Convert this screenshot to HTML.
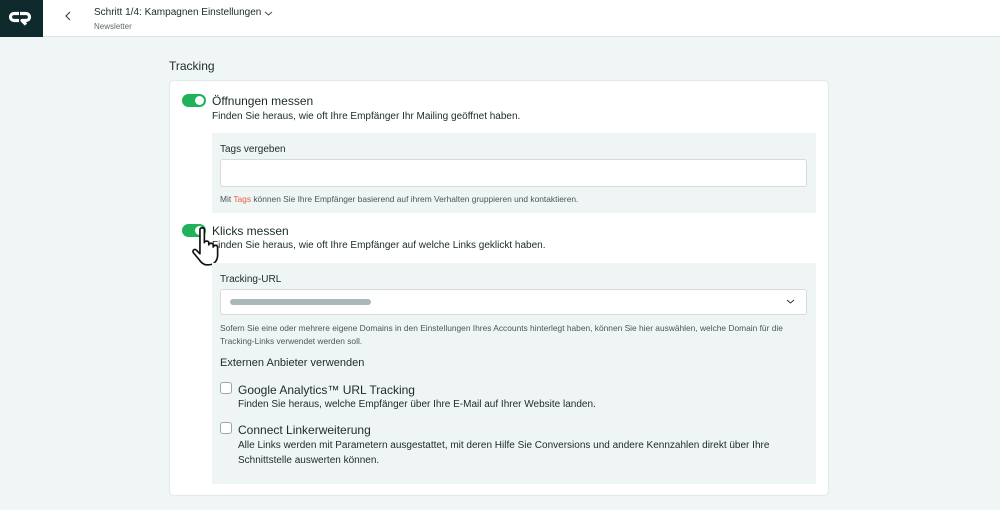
<!DOCTYPE html>
<html><head><meta charset="utf-8"><style>
*{box-sizing:border-box;margin:0;padding:0}
body{width:1000px;height:510px;overflow:hidden;background:#f0f5f5;font-family:"Liberation Sans",sans-serif;color:#1c2a2c;position:relative}
.hdr{position:absolute;left:0;top:0;width:1000px;height:37px;background:#fff;border-bottom:1px solid #dde3e3}
.logo{position:absolute;left:0;top:0;width:43px;height:37px;background:#0f2a2d}
.a{position:absolute;white-space:nowrap}
.card{position:absolute;left:169px;top:80px;width:660px;height:416px;background:#fff;border:1px solid #e3e8e8;border-radius:5px}
.box{position:absolute;background:#eff4f4}
.tog{position:absolute;width:24px;height:13px;border-radius:7px;background:#1fb25a}
.tog:after{content:"";position:absolute;right:2px;top:2px;width:9px;height:9px;border-radius:50%;background:#fff}
.inp{position:absolute;background:#fff;border:1px solid #d5dcdc;border-radius:3px}
.cb{position:absolute;width:12px;height:12px;border:1px solid #9aa5a6;border-radius:3px;background:#fff}
.t13{font-size:12px}.t11{font-size:10px}.t8{font-size:8.4px;color:#4a5758}
</style></head><body>
<div class="hdr"></div>
<div class="logo"><svg width="43" height="37" viewBox="0 0 43 37"><path d="M19 13.5h-5a3.5 3.5 0 0 0 0 7h5" stroke="#fff" stroke-width="3.2" fill="none"/><path d="M20 13.5h6a3.5 3.5 0 0 1 0 7h-4l4 4" stroke="#fff" stroke-width="3.2" fill="none" stroke-linejoin="round"/></svg></div>
<svg class="a" style="left:64px;top:10px" width="8" height="12"><path d="M6 2L2 6l4 4" stroke="#444" fill="none" stroke-width="1.2"/></svg>
<div class="a" style="left:94px;top:7px;font-size:10px;color:#1c2a2c">Schritt 1/4: Kampagnen Einstellungen</div>
<svg class="a" style="left:264px;top:10px" width="9" height="7"><path d="M1 2l3.5 3L8 2" stroke="#444" fill="none"/></svg>
<div class="a" style="left:94px;top:22px;font-size:8px;color:#5d6a6b">Newsletter</div>
<div class="a" style="left:169px;top:59px;font-size:12px">Tracking</div>
<div class="card"></div>
<div class="tog" style="left:182px;top:94px"></div>
<div class="a t13" style="left:212px;top:94px">Öffnungen messen</div>
<div class="a t11" style="left:212px;top:111px">Finden Sie heraus, wie oft Ihre Empfänger Ihr Mailing geöffnet haben.</div>
<div class="box" style="left:212px;top:133px;width:604px;height:80px"></div>
<div class="a t11" style="left:220px;top:144px">Tags vergeben</div>
<div class="inp" style="left:220px;top:159px;width:587px;height:28px"></div>
<div class="a t8" style="left:220px;top:194px">Mit <span style="color:#e8623e">Tags</span> können Sie Ihre Empfänger basierend auf ihrem Verhalten gruppieren und kontaktieren.</div>
<div class="tog" style="left:182px;top:224px"></div>
<div class="a t13" style="left:212px;top:224px">Klicks messen</div>
<div class="a t11" style="left:212px;top:240px">Finden Sie heraus, wie oft Ihre Empfänger auf welche Links geklickt haben.</div>
<svg class="a" style="left:191px;top:225px" width="40" height="42" viewBox="0 0 34 38"><path d="M7 4c0-2 4-2 4 0v12c0-2 4-2 4 0v2c0-2 4-2 4 0v2c0-2 4-2 4 0v7c0 5-3 9-8 9h-2c-3 0-5-2-7-5l-5-6c-1-2 1-4 3-2l3 3z" fill="#fff" stroke="#111" stroke-width="1.5" stroke-linejoin="round"/></svg>
<div class="box" style="left:212px;top:263px;width:604px;height:221px"></div>
<div class="a t11" style="left:220px;top:274px">Tracking-URL</div>
<div class="inp" style="left:220px;top:289px;width:587px;height:26px"></div>
<div class="a" style="left:230px;top:299px;width:141px;height:6px;border-radius:3px;background:#aab8b9"></div>
<svg class="a" style="left:786px;top:298px" width="9" height="7"><path d="M1 2l3.5 3L8 2" stroke="#333" fill="none"/></svg>
<div class="a t8" style="left:220px;top:322px;line-height:13px">Sofern Sie eine oder mehrere eigene Domains in den Einstellungen Ihres Accounts hinterlegt haben, können Sie hier auswählen, welche Domain für die<br>Tracking-Links verwendet werden soll.</div>
<div class="a" style="left:220px;top:357px;font-size:11px">Externen Anbieter verwenden</div>
<div class="cb" style="left:220px;top:382px"></div>
<div class="a t13" style="left:238px;top:383px">Google Analytics™ URL Tracking</div>
<div class="a t11" style="left:238px;top:399px">Finden Sie heraus, welche Empfänger über Ihre E-Mail auf Ihrer Website landen.</div>
<div class="cb" style="left:220px;top:422px"></div>
<div class="a t13" style="left:238px;top:423px">Connect Linkerweiterung</div>
<div class="a t11" style="left:238px;top:438px;line-height:15px">Alle Links werden mit Parametern ausgestattet, mit deren Hilfe Sie Conversions und andere Kennzahlen direkt über Ihre<br>Schnittstelle auswerten können.</div>
</body></html>
